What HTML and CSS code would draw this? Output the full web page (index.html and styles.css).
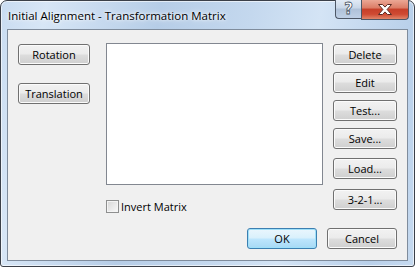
FILE: index.html
```html
<!DOCTYPE html>
<html lang="en">
<head>
  <meta charset="UTF-8" />
  <title>Initial Alignment - Transformation Matrix</title>
  <link rel="stylesheet" href="styles.css">
</head>
<body>

<div class="window">
  <div class="titlebar">
    <span class="title">Initial Alignment - Transformation Matrix</span>
    <div class="caption">
      <div class="cap help">?</div>
      <div class="cap close">
        <svg width="16" height="11" viewBox="0 0 16 11">
          <path d="M1.5 0.5h4l2.5 2.6 2.5-2.6h4l-4.4 5 4.4 5h-4l-2.5-2.6-2.5 2.6h-4l4.4-5z" fill="#fff" stroke="#5a2a22" stroke-width="1" stroke-linejoin="round"/>
        </svg>
      </div>
    </div>
  </div>

  <div class="client">
    <div class="main">
      <div class="col-left">
        <button class="btn">Rotation</button>
        <button class="btn">Translation</button>
      </div>

      <div class="col-mid">
        <div class="listbox"></div>
        <label class="check"><span class="box"></span>Invert Matrix</label>
      </div>

      <div class="col-right">
        <button class="btn">Delete</button>
        <button class="btn">Edit</button>
        <button class="btn">Test...</button>
        <button class="btn">Save...</button>
        <button class="btn load">Load...</button>
        <button class="btn three">3-2-1...</button>
      </div>
    </div>

    <div class="footer">
      <button class="btn default">OK</button>
      <button class="btn">Cancel</button>
    </div>
  </div>
</div>

</body>
</html>
```

FILE: styles.css
```css
html, body {
  margin: 0;
  padding: 0;
  background: #fff;
  font-family: 'Open Sans', 'Segoe UI', sans-serif;
  font-size: 11px;
  color: #000;
}

.window {
  width: 415px;
  height: 267px;
  box-sizing: border-box;
  border: 1px solid #3b4049;
  border-radius: 7px 7px 3px 3px;
  padding: 0 6px 5px 6px;
  background: linear-gradient(100deg, #c9dcf1 0%, #d7e6f6 10%, #b6cde7 35%, #c4d8ee 55%, #d4e4f5 70%, #b9d0ea 90%, #c6daf0 100%);
  box-shadow: inset 0 0 0 1px rgba(255, 255, 255, 0.6);
  display: flex;
  flex-direction: column;
}

.titlebar {
  height: 28px;
  display: flex;
  align-items: flex-start;
  justify-content: space-between;
}

.title {
  margin-top: 7px;
  margin-left: 1px;
  font-size: 11.5px;
  text-shadow: 0 0 6px #fff, 0 0 3px #fff;
}

.caption {
  display: flex;
  margin-top: -1px;
  margin-right: -1px;
}

.cap {
  height: 19px;
  border: 1px solid #4d5766;
  border-top: none;
  display: flex;
  align-items: center;
  justify-content: center;
}

.help {
  width: 26px;
  border-radius: 0 0 0 4px;
  border-right: none;
  background: linear-gradient(#e1eaf5 0%, #c9d7e8 45%, #afc1d8 50%, #bfd0e6 100%);
  color: #fff;
  font-family: 'DejaVu Sans', sans-serif;
  font-weight: bold;
  font-size: 15px;
  -webkit-text-stroke: 0.8px #4a5563;
  padding-bottom: 1px;
  box-sizing: border-box;
}

.close {
  width: 46px;
  border-radius: 0 0 4px 0;
  background: linear-gradient(#eba795 0%, #dc7e68 40%, #c7402a 50%, #cf4a32 75%, #e0866a 100%);
}

.client {
  flex: 1;
  background: #f0f0f0;
  border: 1px solid #7f8c9c;
  padding: 13px 10px 11px 10px;
}

.main {
  display: flex;
}

.col-left {
  width: 72px;
  margin-right: 16px;
  display: flex;
  flex-direction: column;
  gap: 18px;
  padding-top: 1px;
}

.col-mid {
  width: 217px;
  margin-right: 10px;
}

.col-right {
  width: 64px;
  display: flex;
  flex-direction: column;
  gap: 7px;
  padding-top: 1px;
}

.btn {
  height: 21px;
  box-sizing: border-box;
  padding: 0;
  border: 1px solid #707070;
  border-radius: 3px;
  background: linear-gradient(#f2f2f2 0%, #ebebeb 48%, #dddddd 52%, #cfcfcf 100%);
  box-shadow: inset 0 0 0 1px #fbfbfb;
  font-family: inherit;
  font-size: 11px;
  color: #000;
}

.col-left .btn, .col-right .btn {
  width: 100%;
}

.col-right .load {
  margin-top: 2px;
}

.col-right .three {
  margin-top: 3px;
}

.listbox {
  height: 142px;
  box-sizing: border-box;
  background: #fff;
  border: 1px solid #828790;
}

.check {
  margin-top: 15px;
  height: 13px;
  display: flex;
  align-items: center;
  gap: 2px;
  line-height: 13px;
}

.check .box {
  width: 13px;
  height: 13px;
  box-sizing: border-box;
  border: 1px solid #8e8f8f;
  background: linear-gradient(135deg, #d6d6d6 0%, #ececec 60%, #f8f8f8 100%);
  box-shadow: inset 0 0 0 1px #f4f4f4;
}

.footer {
  margin-top: 15px;
  display: flex;
  justify-content: flex-end;
  gap: 10px;
}

.footer .btn {
  width: 70px;
}

.btn.default {
  border-color: #3c7fb1;
  background: linear-gradient(#eaf6fd 0%, #d9f0fc 48%, #bee6fd 52%, #a7d9f5 100%);
  box-shadow: inset 0 0 0 1px #9fe0f9;
}
```
